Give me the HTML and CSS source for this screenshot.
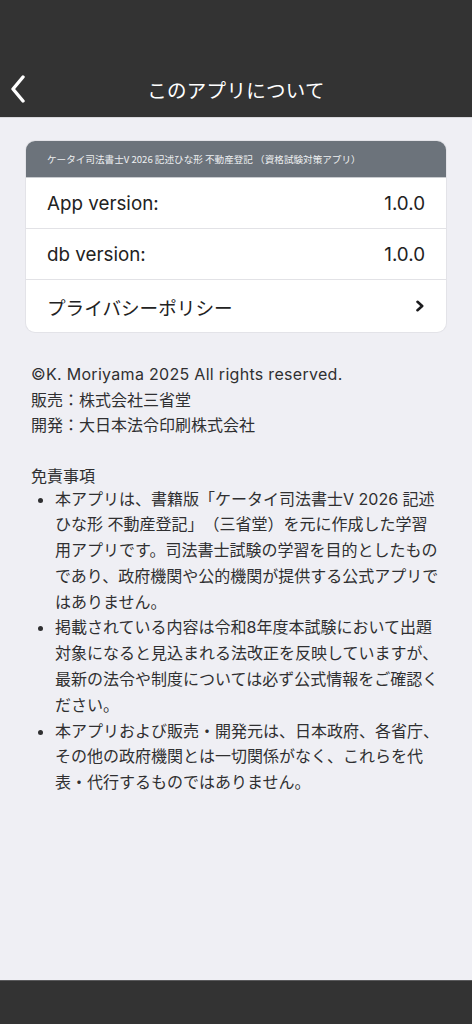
FILE: index.html
```html
<!DOCTYPE html>
<html lang="ja">
<head>
<meta charset="utf-8">
<title>このアプリについて</title>
<link rel="stylesheet" href="styles.css">
</head>
<body>
<div class="screen">
  <header class="topbar">
    <div class="nav">
      <button class="back" aria-label="戻る">
        <svg width="18" height="28" viewBox="0 0 18 28"><path d="M14 2 L4 14 L14 26" fill="none" stroke="#fff" stroke-width="3.4" stroke-linecap="round" stroke-linejoin="round"/></svg>
      </button>
      <h1 class="title">このアプリについて</h1>
    </div>
  </header>
  <main class="content">
    <section class="card">
      <div class="card-head">ケータイ司法書士V 2026 記述ひな形 不動産登記 （資格試験対策アプリ）</div>
      <div class="row"><span>App version:</span><span>1.0.0</span></div>
      <div class="row"><span>db version:</span><span>1.0.0</span></div>
      <div class="row link"><span>プライバシーポリシー</span>
        <svg class="chev" width="10" height="12" viewBox="0 0 10 12"><path d="M2.5 1.8 L7.2 6 L2.5 10.2" fill="none" stroke="#1c1c1e" stroke-width="2.6" stroke-linecap="round" stroke-linejoin="round"/></svg>
      </div>
    </section>
    <section class="info">
      <p>©K. Moriyama 2025 All rights reserved.</p>
      <p>販売：株式会社三省堂</p>
      <p>開発：大日本法令印刷株式会社</p>
    </section>
    <section class="disclaimer">
      <h2>免責事項</h2>
      <ul>
        <li>本アプリは、書籍版「ケータイ司法書士V 2026 記述ひな形 不動産登記」（三省堂）を元に作成した学習用アプリです。司法書士試験の学習を目的としたものであり、政府機関や公的機関が提供する公式アプリではありません。</li>
        <li>掲載されている内容は令和8年度本試験において出題対象になると見込まれる法改正を反映していますが、最新の法令や制度については必ず公式情報をご確認ください。</li>
        <li>本アプリおよび販売・開発元は、日本政府、各省庁、その他の政府機関とは一切関係がなく、これらを代表・代行するものではありません。</li>
      </ul>
    </section>
  </main>
  <footer class="bottombar"></footer>
</div>
</body>
</html>
```

FILE: styles.css
```css
* { box-sizing: border-box; }
html, body { margin: 0; padding: 0; }
body {
  background: #efeff4;
  font-family: Inter, "Noto Sans CJK JP", "Noto Sans", sans-serif;
  color: #2c2c2e;
  text-spacing-trim: space-all;
}
.screen {
  height: 1024px;
  display: flex;
  flex-direction: column;
}
.topbar {
  height: 118px;
  background: #333333;
  border-bottom: 1px solid #d8d8dc;
  display: flex;
  align-items: flex-end;
}
.nav {
  height: 50px;
  width: 100%;
  display: flex;
  align-items: center;
  justify-content: center;
  position: relative;
  margin-bottom: 3px;
}
.back {
  position: absolute;
  left: 9px;
  top: 11px;
  background: none;
  border: 0;
  padding: 0;
  width: 18px;
  height: 28px;
}
.back svg { display: block; }
.title {
  margin: 0;
  color: #ffffff;
  font-size: 19.5px;
  font-weight: 400;
  letter-spacing: 0.3px;
  font-family: "Noto Sans CJK JP", sans-serif;
}
.content {
  flex: 1;
  padding: 23px 26px 0;
}
.card {
  background: #ffffff;
  border-radius: 9px;
  overflow: hidden;
  box-shadow: 0 0 0 1px #e3e3e8;
}
.card-head {
  height: 37px;
  background: #6c737b;
  color: #eef0f2;
  font-size: 9.6px;
  display: flex;
  align-items: center;
  padding-left: 21px;
  border-bottom: 1px solid #c9ccd0;
  font-family: "Noto Sans CJK JP", sans-serif;
}
.row {
  height: 51px;
  display: flex;
  align-items: center;
  justify-content: space-between;
  padding: 0 21px;
  font-size: 18.8px;
  color: #222222;
  border-bottom: 1px solid #e2e2e6;
}
.row.link { border-bottom: 0; height: 52px; }
.row.link span { font-family: "Noto Sans CJK JP", sans-serif; font-size: 18.6px; }
.info {
  margin-top: 30px;
  padding: 0 5px;
  font-size: 16px;
  line-height: 25.5px;
  letter-spacing: 0.3px;
  color: #2f2f31;
}
.info p { margin: 0; }
.info p + p { letter-spacing: 0; }
.disclaimer {
  margin-top: 26px;
  padding: 0 5px;
  font-size: 16px;
  color: #2f2f31;
}
.disclaimer h2 {
  margin: 0;
  font-size: 16px;
  font-weight: 400;
  line-height: 22px;
}
.disclaimer ul {
  margin: 0;
  padding-left: 24px;
  line-height: 25.8px;
}
.bottombar {
  height: 44px;
  background: #333333;
  border-top: 1px solid #5a5a5c;
}
```
